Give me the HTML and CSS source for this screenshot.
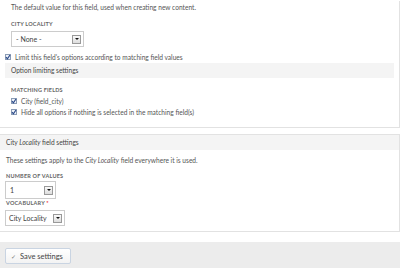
FILE: index.html
```html
<!DOCTYPE html>
<html lang="en">
<head>
  <meta charset="UTF-8">
  <title>City Locality field settings</title>
  <link rel="stylesheet" href="styles.css">
</head>
<body>
  <div class="panel panel-default">
    <div class="indent">
      <p class="desc">The default value for this field, used when creating new content.</p>
      <div class="label label-first">CITY LOCALITY</div>
      <div class="select select-none">
        <span>- None -</span>
        <span class="select-arrow"></span>
      </div>
    </div>
    <label class="check check-top">
      <span class="check-box"><svg width="6" height="6" viewBox="0 0 6 6"><path d="M1 3.2 L2.4 4.8 L5 1" fill="none" stroke="#2b4a8a" stroke-width="1.2"/></svg></span>
      Limit this field's options according to matching field values
    </label>
    <div class="subhead">Option limiting settings</div>
    <div class="subbody">
      <div class="label">MATCHING FIELDS</div>
      <label class="check">
        <span class="check-box"><svg width="6" height="6" viewBox="0 0 6 6"><path d="M1 3.2 L2.4 4.8 L5 1" fill="none" stroke="#2b4a8a" stroke-width="1.2"/></svg></span>
        City (field_city)
      </label>
      <label class="check">
        <span class="check-box"><svg width="6" height="6" viewBox="0 0 6 6"><path d="M1 3.2 L2.4 4.8 L5 1" fill="none" stroke="#2b4a8a" stroke-width="1.2"/></svg></span>
        Hide all options if nothing is selected in the matching field(s)
      </label>
    </div>
  </div>

  <div class="panel panel-field">
    <div class="panel-head">City <em>Locality</em> field settings</div>
    <div class="panel-body">
      <p class="desc">These settings apply to the <em>City Locality</em> field everywhere it is used.</p>
      <div class="label label-values">NUMBER OF VALUES</div>
      <div class="select select-values">
        <span>1</span>
        <span class="select-arrow"></span>
      </div>
      <div class="label label-vocab">VOCABULARY <span class="required">*</span></div>
      <div class="select select-vocab">
        <span>City Locality</span>
        <span class="select-arrow"></span>
      </div>
    </div>
  </div>

  <div class="actions">
    <button class="button" type="button"><span class="button-check">&#10003;</span>Save settings</button>
  </div>
</body>
</html>
```

FILE: styles.css
```css
body {
  margin: 0;
  width: 400px;
  font-family: Lato, "Open Sans", sans-serif;
  font-size: 6.6px;
  color: #555;
  background-color: #fff;
}
p {
  margin: 0;
}
.panel {
  border: 1px solid #e2e2e2;
  border-left: none;
}
.panel-default {
  border-top: none;
  padding: 0 5px 10px 5px;
}
.indent {
  padding-left: 6px;
}
.desc {
  line-height: 12px;
  margin-top: 1px;
}
.label {
  font-size: 5.5px;
  font-weight: bold;
  letter-spacing: 0.2px;
  color: #666;
  line-height: 10px;
}
.label-first {
  margin-top: 6px;
}
.select {
  display: flex;
  align-items: center;
  justify-content: space-between;
  box-sizing: border-box;
  border: 1px solid #ccc;
  background-color: #fff;
  color: #444;
  font-size: 7px;
  padding: 0 2px 0 4px;
}
.select-arrow {
  box-sizing: border-box;
  width: 9px;
  height: 9px;
  border: 1px solid #999;
  background: linear-gradient(#fafafa, #ddd);
  display: flex;
  align-items: center;
  justify-content: center;
}
.select-arrow::after {
  content: "";
  border-left: 2px solid transparent;
  border-right: 2px solid transparent;
  border-top: 2px solid #111;
}
.select-none {
  width: 73px;
  height: 16px;
  margin-top: 2px;
}
.check {
  display: flex;
  align-items: center;
  gap: 4px;
  line-height: 10px;
}
.check-box {
  box-sizing: border-box;
  width: 6px;
  height: 6px;
  border: 1px solid #8a9bb5;
  background-color: #eef2f8;
  display: flex;
}
.check-box svg {
  margin: -1px;
}
.check-top {
  margin-top: 5px;
}
.subhead {
  margin-top: 1px;
  height: 15px;
  line-height: 15px;
  padding-left: 6px;
  background-color: #f4f4f4;
  color: #444;
}
.subbody {
  padding-left: 6px;
}
.subbody .label {
  margin-top: 7px;
}
.subbody .check {
  margin-top: 1px;
}
.panel-field {
  margin-top: 6px;
  padding-bottom: 5px;
}
.panel-head {
  height: 15px;
  line-height: 15px;
  padding-left: 6px;
  background-color: #f4f4f4;
  color: #444;
}
.panel-body {
  padding-left: 5px;
}
.panel-body .desc {
  margin-top: 5px;
  line-height: 10px;
  padding-left: 1px;
}
.label-values {
  margin-top: 6px;
  padding-left: 1px;
}
.select-values {
  width: 51px;
  height: 18px;
}
.label-vocab {
  line-height: 8px;
  padding-left: 1px;
}
.required {
  color: #e33;
}
.select-vocab {
  width: 60px;
  height: 16px;
  margin-top: 3px;
  padding-left: 3px;
}
.actions {
  margin-top: 10px;
  height: 26px;
  box-sizing: border-box;
  padding: 6px 0 0 5px;
  background-color: #ececec;
}
.button {
  display: flex;
  align-items: center;
  height: 16px;
  width: 66px;
  padding: 0 0 0 5px;
  border: 1px solid #c9d4e2;
  border-radius: 2px;
  background: linear-gradient(#fff, #f3f3f3);
  font-family: Lato, "Open Sans", sans-serif;
  font-size: 7.5px;
  color: #444;
}
.button-check {
  color: #777;
  font-size: 6px;
  margin-right: 4px;
}
```
